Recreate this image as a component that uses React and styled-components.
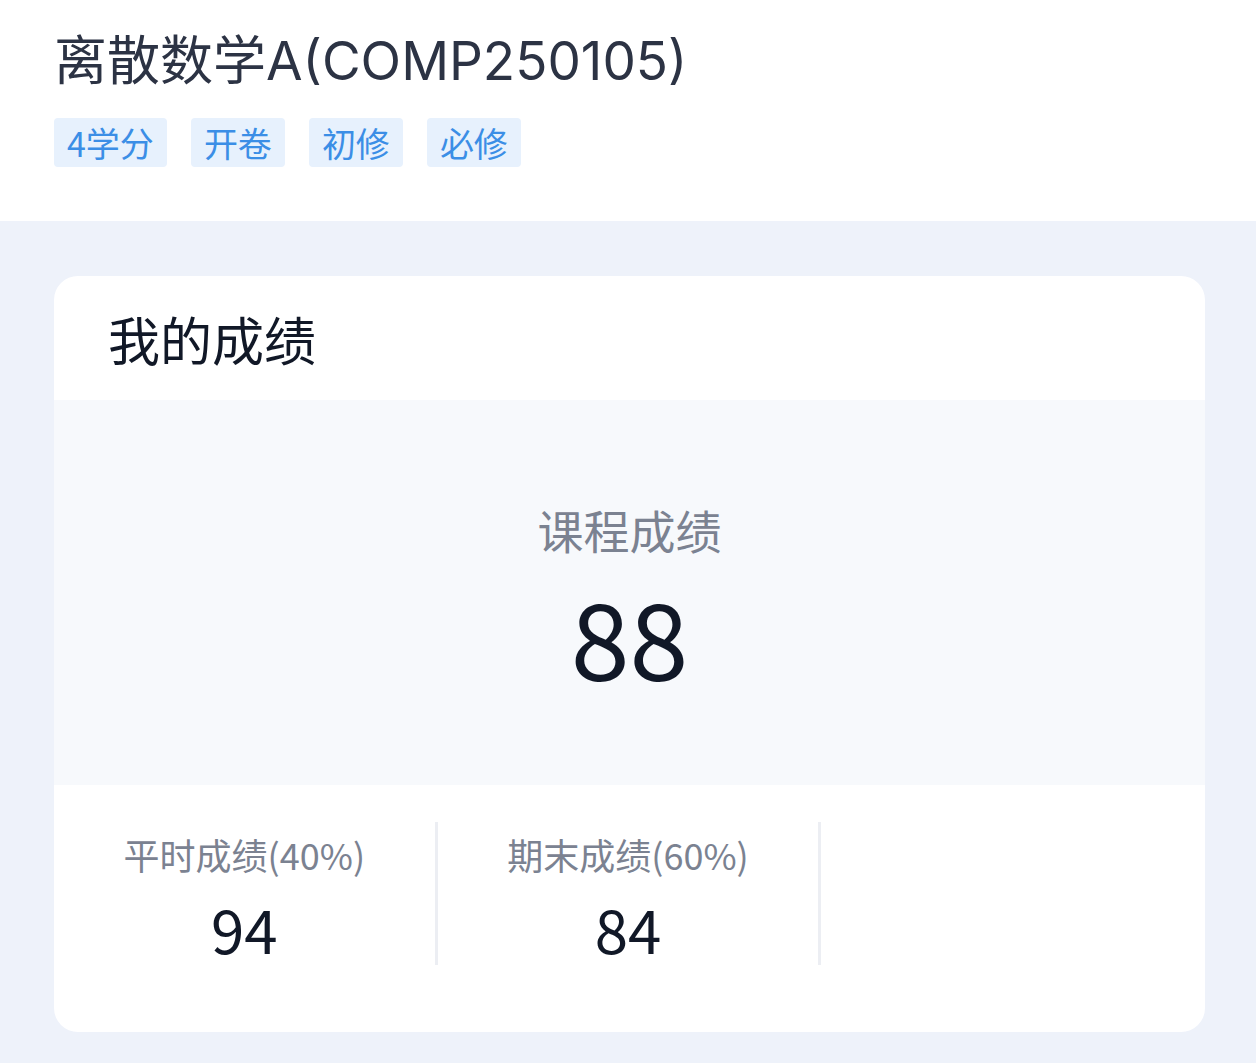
import React from 'react';
import styled, { createGlobalStyle } from 'styled-components';

const GlobalStyle = createGlobalStyle`
  html, body {
    margin: 0;
    padding: 0;
    background: #eef2fa;
    font-family: "Noto Sans CJK SC", "Noto Sans", sans-serif;
  }
`;

const Page = styled.div`
  min-height: 1063px;
  background: #eef2fa;
`;

const Header = styled.header`
  background: #fff;
  padding: 25px 54px 54px 54px;
`;

const Title = styled.h1`
  margin: 0;
  font-family: Inter, "Noto Sans CJK SC", sans-serif;
  font-size: 53px;
  line-height: 72px;
  font-weight: 400;
  color: #2c3344;
`;

const TagRow = styled.div`
  display: flex;
  gap: 24px;
  margin-top: 21px;
`;

const Tag = styled.span`
  display: inline-flex;
  align-items: center;
  height: 49px;
  padding: 0 13px;
  background: #e7f1fd;
  color: #3b8ee6;
  font-size: 34px;
  border-radius: 4px;
`;

const Card = styled.section`
  margin: 55px 51px 0 54px;
  background: #fff;
  border-radius: 24px;
  overflow: hidden;
`;

const CardHeader = styled.div`
  height: 124px;
  display: flex;
  align-items: center;
  padding: 0 54px;
  font-size: 52px;
  color: #111827;
`;

const Summary = styled.div`
  height: 385px;
  background: #f7f9fc;
  display: flex;
  flex-direction: column;
  align-items: center;
  padding-top: 97px;
  box-sizing: border-box;
`;

const SummaryLabel = styled.div`
  font-size: 46px;
  line-height: 64px;
  color: #7b8291;
`;

const SummaryValue = styled.div`
  font-size: 106px;
  line-height: 124px;
  margin-top: 12px;
  color: #111827;
`;

const Breakdown = styled.div`
  display: grid;
  grid-template-columns: repeat(3, 1fr);
  padding: 37px 0 67px;
`;

const Item = styled.div`
  height: 143px;
  display: flex;
  flex-direction: column;
  align-items: center;
  border-right: ${p => (p.$last ? 'none' : '3px solid #eceef3')};
`;

const ItemLabel = styled.div`
  font-size: 36px;
  line-height: 64px;
  color: #7b8291;
`;

const ItemValue = styled.div`
  font-size: 60px;
  line-height: 72px;
  margin-top: 6px;
  color: #111827;
`;

const tags = ['4学分', '开卷', '初修', '必修'];

const parts = [
  { label: '平时成绩(40%)', value: 94 },
  { label: '期末成绩(60%)', value: 84 },
];

export default function App() {
  return (
    <Page>
      <GlobalStyle />
      <Header>
        <Title>离散数学A(COMP250105)</Title>
        <TagRow>
          {tags.map(t => (
            <Tag key={t}>{t}</Tag>
          ))}
        </TagRow>
      </Header>
      <Card>
        <CardHeader>我的成绩</CardHeader>
        <Summary>
          <SummaryLabel>课程成绩</SummaryLabel>
          <SummaryValue>88</SummaryValue>
        </Summary>
        <Breakdown>
          {parts.map(p => (
            <Item key={p.label}>
              <ItemLabel>{p.label}</ItemLabel>
              <ItemValue>{p.value}</ItemValue>
            </Item>
          ))}
          <Item $last />
        </Breakdown>
      </Card>
    </Page>
  );
}
